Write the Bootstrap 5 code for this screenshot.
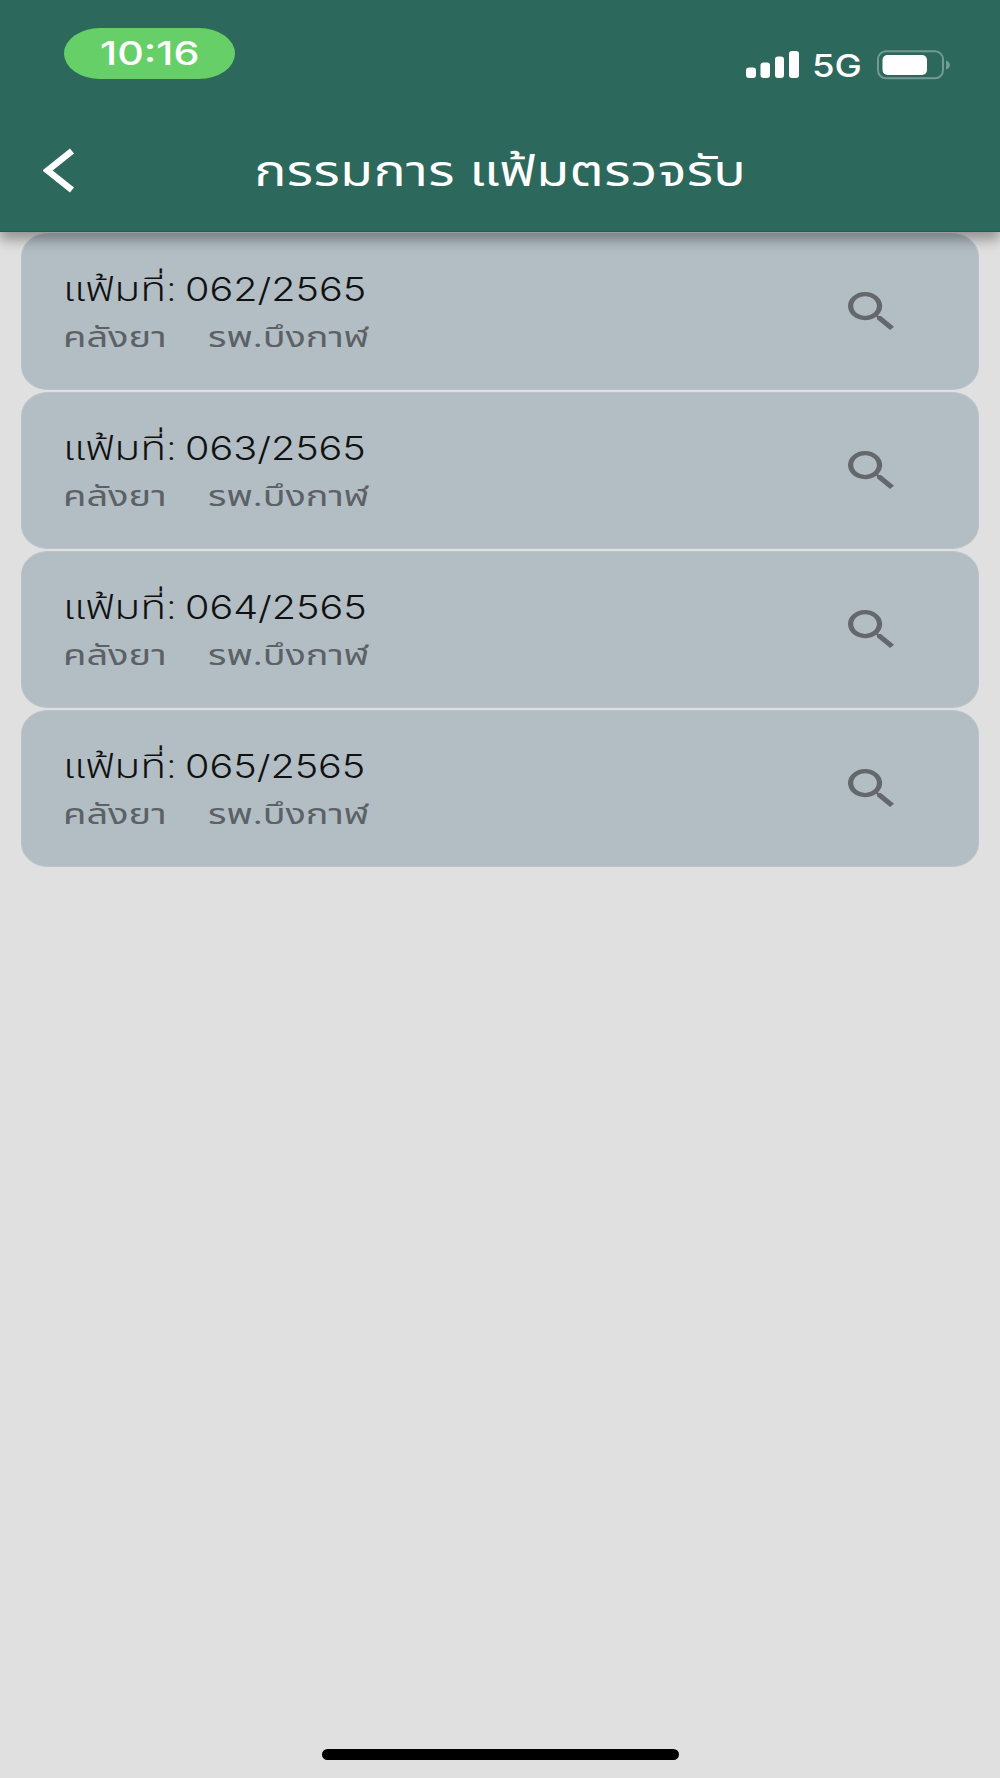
<!DOCTYPE html>
<html lang="th">
<head>
<meta charset="utf-8">
<meta name="viewport" content="width=device-width, initial-scale=1">
<title>กรรมการ แฟ้มตรวจรับ</title>
<link href="https://cdn.jsdelivr.net/npm/bootstrap@5.3.0/dist/css/bootstrap.min.css" rel="stylesheet">
<style>
  body { background: #e0e0e0; font-family: "Open Sans", "Noto Sans Thai", "Noto Sans", sans-serif; }
  .screen { height: 1778px; overflow: hidden; }
  .topbar { height: 232px; background: #2c685c; box-shadow: 0 8px 12px rgba(0,0,0,.34); z-index: 2; border-bottom: 1px solid #17604f; }
  .status { height: 110px; padding: 28px 50px 0 64px; }
  .clock { width: 171px; height: 51px; background: #67cf68; border-radius: 36px / 25.5px; }
  .stretch { display: inline-block; white-space: pre; line-height: 1; transform-origin: left center; }
  .clock .stretch { font: 500 33px/1 Inter, sans-serif; transform: scaleX(1.25); transform-origin: center; }
  .signal { padding-top: 22px; }
  .net { font: 500 31px/1 Inter, sans-serif; transform: scaleX(1.18); width: 50px; margin-left: 12px; margin-right: 14px; }
  .titlebar { height: 121px; padding: 0 43px 2px 43px; }
  .back-icon { width: 34px; }
  .heading { font-size: 42px; font-weight: 400; letter-spacing: .3px; transform: scaleX(1.28); transform-origin: center; }
  .files { gap: 2px; padding: 1px 21.5px 0 21px; }
  .file { height: 157px; background: #b2bdc4; border-radius: 27px / 24px; border: 1px solid #b9c3c9; padding: 0 83.5px 0 41px; }
  .file > svg { margin-bottom: 2px; }
  .name { font-size: 33px; font-weight: 300; color: #111; padding-top: 38px; height: 88px; }
  .place { font-size: 28px; font-weight: 400; color: #5b6165; }
  .lbl { width: 122px; transform: scaleX(1.29); }
  .num { font: 300 32px/1 Inter, sans-serif; padding-top: 2px; transform: scaleX(1.235); }
  .dep { width: 145px; transform: scaleX(1.36); }
  .hosp { transform: scaleX(1.35); }
  .homebar { width: 357px; height: 11px; background: #000; margin-bottom: 18px; }
</style>
</head>
<body>
<svg class="d-none"><symbol id="search" viewBox="3 3 17.490 17.490" preserveAspectRatio="none"><path fill="#64686c" d="M15.500 14h-.79l-.28-.27C15.410 12.590 16 11.110 16 9.500 16 5.910 13.090 3 9.500 3S3 5.910 3 9.500 5.910 16 9.500 16c1.610 0 3.090-.59 4.230-1.570l.27.28v.79l5 4.990L20.490 19l-4.990-5zm-6 0C7.010 14 5 11.990 5 9.500S7.010 5 9.500 5 14 7.010 14 9.500 11.990 14 9.500 14z"/></symbol></svg>
<div class="screen d-flex flex-column">
  <header class="topbar position-relative text-white flex-shrink-0">
    <div class="status d-flex justify-content-between align-items-start">
      <div class="clock d-flex align-items-center justify-content-center"><span class="stretch">10:16</span></div>
      <div class="signal d-flex align-items-start">
        <svg width="54" height="28" viewBox="0 0 54 28" fill="#fff"><rect x="0" y="17.500" width="10" height="10.500" rx="3"/><rect x="14.500" y="12.500" width="9.500" height="15.500" rx="3"/><rect x="29" y="6.500" width="9" height="21.500" rx="3"/><rect x="43" y="1" width="10" height="27" rx="3"/></svg>
        <span class="stretch net">5G</span>
        <svg width="74" height="30" viewBox="0 0 74 30"><rect x="2" y="1.300" width="65" height="27" rx="8" fill="none" stroke="#739b93" stroke-width="2"/><rect x="6.500" y="5" width="44.500" height="20" rx="5" fill="#fff"/><path d="M70 10.500Q74 12 74 15T70 19.500Z" fill="#739b93"/></svg>
      </div>
    </div>
    <div class="titlebar d-flex align-items-center justify-content-between">
      <svg class="back-icon" height="46" viewBox="0 0 34 46"><path d="M29 4L4.500 23.500L29 43" fill="none" stroke="#fff" stroke-width="6.500"/></svg>
      <h1 class="heading stretch m-0">กรรมการ แฟ้มตรวจรับ</h1>
      <span class="back-icon"></span>
    </div>
  </header>
  <main class="files d-flex flex-column flex-grow-1">
    <div class="file d-flex align-items-center justify-content-between"><div class="h-100"><div class="name d-flex"><span class="stretch lbl">แฟ้มที่:</span><span class="stretch num">062/2565</span></div><div class="place d-flex"><span class="stretch dep">คลังยา</span><span class="stretch hosp">รพ.บึงกาฬ</span></div></div><svg width="46" height="38"><use href="#search"/></svg></div>
    <div class="file d-flex align-items-center justify-content-between"><div class="h-100"><div class="name d-flex"><span class="stretch lbl">แฟ้มที่:</span><span class="stretch num">063/2565</span></div><div class="place d-flex"><span class="stretch dep">คลังยา</span><span class="stretch hosp">รพ.บึงกาฬ</span></div></div><svg width="46" height="38"><use href="#search"/></svg></div>
    <div class="file d-flex align-items-center justify-content-between"><div class="h-100"><div class="name d-flex"><span class="stretch lbl">แฟ้มที่:</span><span class="stretch num">064/2565</span></div><div class="place d-flex"><span class="stretch dep">คลังยา</span><span class="stretch hosp">รพ.บึงกาฬ</span></div></div><svg width="46" height="38"><use href="#search"/></svg></div>
    <div class="file d-flex align-items-center justify-content-between"><div class="h-100"><div class="name d-flex"><span class="stretch lbl">แฟ้มที่:</span><span class="stretch num">065/2565</span></div><div class="place d-flex"><span class="stretch dep">คลังยา</span><span class="stretch hosp">รพ.บึงกาฬ</span></div></div><svg width="46" height="38"><use href="#search"/></svg></div>
  </main>
  <footer class="d-flex justify-content-center"><div class="homebar rounded-pill"></div></footer>
</div>
<script src="https://cdn.jsdelivr.net/npm/bootstrap@5.3.0/dist/js/bootstrap.bundle.min.js"></script>
</body>
</html>
